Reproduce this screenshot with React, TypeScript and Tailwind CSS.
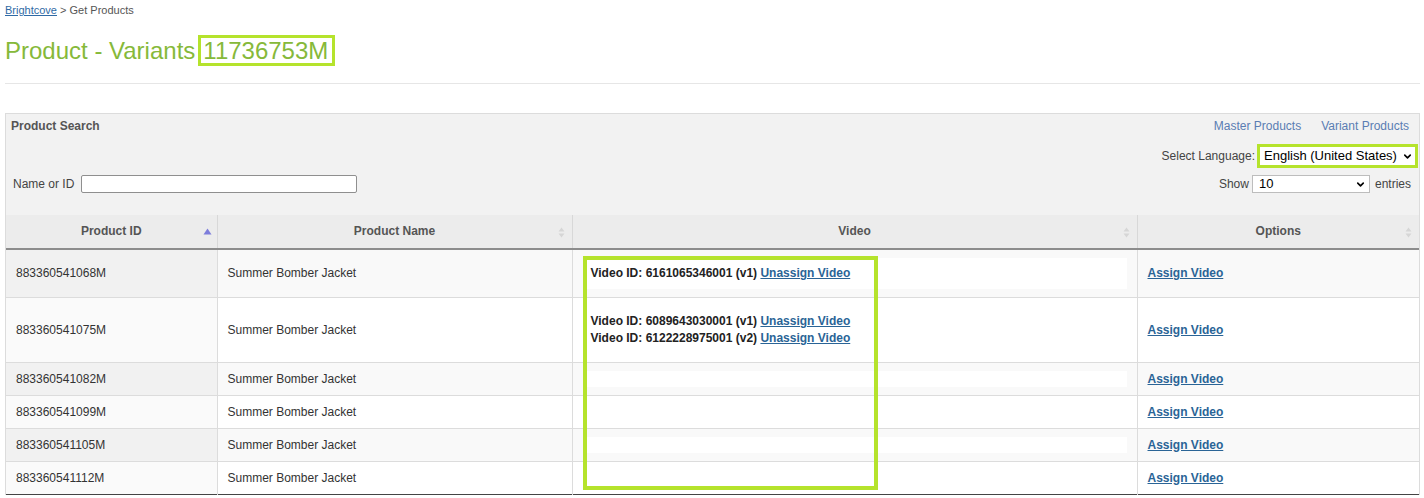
import React from 'react';
import { ChevronDown } from 'lucide-react';

type Row = { id: string; name: string; videos: { id: string; v: string }[] };

const rows: Row[] = [
  { id: '883360541068M', name: 'Summer Bomber Jacket', videos: [{ id: '6161065346001', v: 'v1' }] },
  {
    id: '883360541075M',
    name: 'Summer Bomber Jacket',
    videos: [
      { id: '6089643030001', v: 'v1' },
      { id: '6122228975001', v: 'v2' },
    ],
  },
  { id: '883360541082M', name: 'Summer Bomber Jacket', videos: [] },
  { id: '883360541099M', name: 'Summer Bomber Jacket', videos: [] },
  { id: '883360541105M', name: 'Summer Bomber Jacket', videos: [] },
  { id: '883360541112M', name: 'Summer Bomber Jacket', videos: [] },
];

const SortBoth = () => (
  <svg width="7" height="11" viewBox="0 0 7 11" className="absolute right-[7px] top-[12px]">
    <path d="M3.5 0.5 L6.5 4.5 L0.5 4.5 Z" fill="#d6d6d6" />
    <path d="M3.5 10.5 L6.5 6.5 L0.5 6.5 Z" fill="#d6d6d6" />
  </svg>
);

const SortAsc = () => (
  <svg width="9" height="7" viewBox="0 0 9 7" className="absolute right-[5px] top-[13px]">
    <path d="M4.5 0.5 L8.5 6.5 L0.5 6.5 Z" fill="#7d7ddb" />
  </svg>
);

const App: React.FC = () => {
  return (
    <div className="relative w-[1424px] h-[498px] overflow-hidden bg-white pl-[5px] pr-[4px] font-['Liberation_Sans',Arial,sans-serif] text-[12px] text-[#333]">
      {/* breadcrumb */}
      <div className="pt-[3px] text-[11px] leading-[14px] text-[#555]">
        <a className="text-[#2f6aa5] underline">Brightcove</a>
        <span> &gt; Get Products</span>
      </div>

      {/* title */}
      <h1 className="mt-[18px] flex items-center text-[24px] leading-[25px] text-[#86b93a]">
        <span>Product - Variants</span>
        <span className="ml-[3px] border-[3px] border-[#b5e32c] pl-[2px] pr-[4px]">11736753M</span>
      </h1>

      <div className="mt-[17px] h-px bg-[#e6e6e6]" />

      {/* panel */}
      <div className="mt-[29px] border border-b-0 border-[#dcdcdc] bg-[#f2f2f2]">
        <div className="flex h-[24px] items-center justify-between pl-[5px] pr-[10px]">
          <span className="font-bold text-[#555]">Product Search</span>
          <div className="flex gap-[20px] text-[#5a7db3]">
            <a>Master Products</a>
            <a>Variant Products</a>
          </div>
        </div>

        <div className="mt-[5px] flex h-[26px] items-center justify-end pr-[1px] text-[#444]">
          <span className="mr-[2px]">Select Language:</span>
          <div className="border-[3px] border-[#b5e32c]">
            <div className="relative flex h-[18px] w-[155px] items-center bg-white pl-[4px] text-[13px] text-black">
              English (United States)
              <ChevronDown size={11} strokeWidth={3.5} className="absolute right-[2px] top-[4px]" />
            </div>
          </div>
        </div>

        <div className="mt-[6px] flex h-[18px] items-center justify-between pl-[7px] pr-[8px] text-[#444]">
          <div className="flex items-center">
            <span className="mr-[7px]">Name or ID</span>
            <div className="h-[18px] w-[276px] rounded-[2px] border border-[#8f8f8f] bg-white" />
          </div>
          <div className="flex items-center">
            <span className="mr-[3px]">Show</span>
            <div className="relative flex h-[18px] w-[118px] items-center border border-[#bdbdbd] bg-white pl-[6px] text-[13px] text-black">
              10
              <ChevronDown size={11} strokeWidth={3.5} className="absolute right-[3px] top-[3px]" />
            </div>
            <span className="ml-[5px]">entries</span>
          </div>
        </div>

        <table className="mt-[22px] w-full table-fixed border-collapse leading-[15px]">
          <colgroup>
            <col className="w-[211px]" />
            <col className="w-[355px]" />
            <col className="w-[565px]" />
            <col />
          </colgroup>
          <thead>
            <tr className="h-[34px] border-b-2 border-[#8c8c8c] bg-[#ececec] text-[#555]">
              <th className="relative border-r border-[#d8d8d8] font-bold">
                Product ID
                <SortAsc />
              </th>
              <th className="relative border-r border-[#d8d8d8] font-bold">
                Product Name
                <SortBoth />
              </th>
              <th className="relative border-r border-[#d8d8d8] font-bold">
                Video
                <SortBoth />
              </th>
              <th className="relative font-bold">
                Options
                <SortBoth />
              </th>
            </tr>
          </thead>
          <tbody>
            {rows.map((r, i) => {
              const odd = i % 2 === 0;
              return (
                <tr
                  key={r.id}
                  className={`${odd ? 'bg-[#f9f9f9]' : 'bg-white'} border-b border-[#dcdcdc] last:border-[#444]`}
                >
                  <td className={`border-r border-[#dcdcdc] px-[10px] py-[8px] ${odd ? 'bg-[#f1f1f1]' : 'bg-[#fafafa]'}`}>
                    {r.id}
                  </td>
                  <td className="border-r border-[#dcdcdc] px-[10px] py-[8px]">{r.name}</td>
                  <td className="border-r border-[#dcdcdc] px-[10px] py-[8px]">
                    <div className="min-h-[16px] bg-white p-[8px] font-bold text-[#222]">
                      {r.videos.map((v, j) => (
                        <div key={v.id} className={j > 0 ? 'mt-[2px]' : ''}>
                          Video ID: {v.id} ({v.v}){' '}
                          <a className="text-[#2a6496] underline">Unassign Video</a>
                        </div>
                      ))}
                    </div>
                  </td>
                  <td className="px-[10px] py-[8px]">
                    <a className="font-bold text-[#2a6496] underline">Assign Video</a>
                  </td>
                </tr>
              );
            })}
          </tbody>
        </table>
      </div>

      {/* annotation box over video column */}
      <div className="pointer-events-none absolute left-[583px] top-[256px] h-[234px] w-[295px] border-4 border-[#b5e32c]" />
    </div>
  );
};

export default App;
